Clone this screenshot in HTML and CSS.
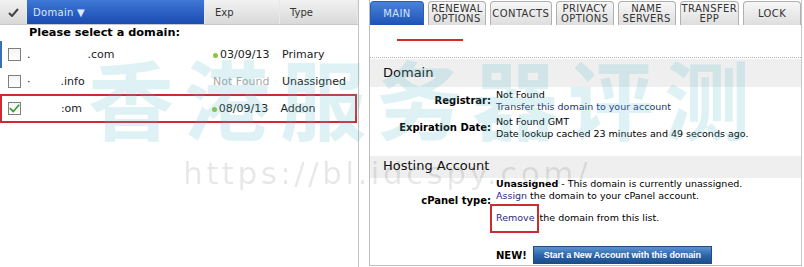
FILE: index.html
```html
<!DOCTYPE html>
<html lang="en">
<head>
  <meta charset="UTF-8" />
  <title>Domain Manager</title>
  <link rel="stylesheet" href="styles.css">
</head>
<body>
  <div class="page">
    <div class="domain-list">
      <div class="list-head">
        <div class="col-check">
          <svg width="11" height="9" viewBox="0 0 11 9"><path d="M1 5 L4 8 L10 1" fill="none" stroke="#444" stroke-width="2"/></svg>
        </div>
        <div class="col-domain sorted">Domain &#9660;</div>
        <div class="col-exp">Exp</div>
        <div class="col-type">Type</div>
      </div>
      <div class="list-title">Please select a domain:</div>
      <div class="row first">
        <div class="col-check"><span class="box"></span></div>
        <div class="col-domain">.<span class="redact r1"></span>.com</div>
        <div class="col-exp"><span class="dot"></span>03/09/13</div>
        <div class="col-type">Primary</div>
      </div>
      <div class="row">
        <div class="col-check"><span class="box"></span></div>
        <div class="col-domain">&middot;<span class="redact r2"></span>.info</div>
        <div class="col-exp missing">Not Found</div>
        <div class="col-type">Unassigned</div>
      </div>
      <div class="row marked">
        <div class="col-check">
          <span class="box">
            <svg width="13" height="11" viewBox="0 0 13 11"><path d="M1 5 L5 9 L12 1" fill="none" stroke="#3a9a3a" stroke-width="2"/></svg>
          </span>
        </div>
        <div class="col-domain"><span class="redact r3"></span>:om</div>
        <div class="col-exp"><span class="dot"></span>08/09/13</div>
        <div class="col-type">Addon</div>
      </div>
    </div>

    <div class="details">
      <div class="tabs">
        <div class="tab active">MAIN</div>
        <div class="tab">RENEWAL<br>OPTIONS</div>
        <div class="tab wide">CONTACTS</div>
        <div class="tab">PRIVACY<br>OPTIONS</div>
        <div class="tab">NAME<br>SERVERS</div>
        <div class="tab">TRANSFER<br>EPP</div>
        <div class="tab">LOCK</div>
      </div>
      <div class="title-strip"><span class="strike"></span></div>

      <div class="section-head">Domain</div>
      <div class="fields">
        <div class="label">Registrar:</div>
        <div class="value">Not Found<br><a href="#">Transfer this domain to your account</a></div>
        <div class="label">Expiration Date:</div>
        <div class="value">Not Found GMT<br>Date lookup cached 23 minutes and 49 seconds ago.</div>
      </div>

      <div class="section-head hosting">Hosting Account</div>
      <div class="fields tight">
        <div class="label">cPanel type:</div>
        <div class="value">
          <b>Unassigned</b> - This domain is currently unassigned.<br>
          <a href="#">Assign</a> the domain to your cPanel account.
          <div class="remove-line"><a href="#" class="boxed">Remove</a> the domain from this list.</div>
        </div>
      </div>
      <div class="new-account">
        <b>NEW!</b>
        <button class="start-button">Start a New Account with this domain</button>
      </div>
    </div>
  </div>

  <div class="watermark">
    <div class="wm-cn">香港服务器评测</div>
    <div class="wm-url">https://bl.idcspy.com/</div>
  </div>
</body>
</html>
```

FILE: styles.css
```css
* { margin: 0; padding: 0; box-sizing: border-box; }
body {
  font-family: "DejaVu Sans", Verdana, sans-serif;
  background: #fff;
  color: #000;
  width: 804px;
  height: 267px;
  overflow: hidden;
  position: relative;
}
.page {
  display: flex;
  height: 267px;
}

/* left list */
.domain-list {
  width: 359px;
  border-right: 1px solid #c4c4c4;
  font-size: 11px;
}
.list-head {
  display: flex;
  height: 25px;
  background: linear-gradient(#f2f2f2, #d9d9d9);
  border-bottom: 1px solid #c9c9c9;
  color: #333;
  font-size: 10px;
}
.list-head > div {
  display: flex;
  align-items: center;
  border-right: 1px solid #e8e8e8;
}
.list-head .sorted {
  background: linear-gradient(#3f78d6, #1a4bb0);
  color: #dce8ff;
  padding-left: 6px;
  letter-spacing: 0.3px;
}
.col-check { width: 27px; justify-content: center; display: flex; align-items: center; }
.col-domain { width: 178px; }
.col-exp { width: 75px; padding-left: 8px; }
.col-type { width: 78px; padding-left: 2px; }
.list-head .col-exp { padding-left: 10px; }
.list-head .col-type { padding-left: 10px; }

.list-title {
  height: 16px;
  padding-left: 29px;
  font-weight: bold;
  font-size: 11.3px;
  line-height: 16px;
}
.row {
  display: flex;
  align-items: center;
  height: 27px;
  font-size: 11px;
  color: #222;
}
.row.first { border-left: 2px solid #3b6fb5; }
.row.first .col-check { width: 25px; }
.row .col-check { justify-content: flex-end; padding-right: 6px; }
.box {
  width: 13px;
  height: 13px;
  border: 1px solid #7f7f7f;
  background: linear-gradient(#f4f4f4, #fff);
  display: flex;
  align-items: center;
  justify-content: center;
}
.redact { display: inline-block; height: 10px; background: #fff; }
.r1 { width: 57px; }
.r2 { width: 30px; }
.r3 { width: 34px; }
.dot {
  display: inline-block;
  width: 5px;
  height: 5px;
  border-radius: 50%;
  background: #8cc63f;
  margin-right: 2px;
  vertical-align: middle;
}
.missing { color: #a8a8a8; }
.row.marked {
  outline: 2px solid #cf2a30;
  outline-offset: -1px;
  margin-left: 1px;
  width: 355px;
}
.row.marked .col-check { width: 26px; }

/* right panel */
.details {
  margin-left: 10px;
  width: 433px;
  border-left: 1px solid #bdbdbd;
  border-right: 1px solid #c8c8c8;
  border-bottom: 1px solid #bdbdbd;
  height: 266px;
  font-size: 10px;
}
.tabs {
  display: flex;
  gap: 4px;
  height: 25px;
  padding-left: 1px;
  margin-left: -1px;
}
.tab {
  flex: 1 0 0;
  height: 24px;
  margin-top: 1px;
  border: 1px solid #b0b0b0;
  border-bottom: none;
  border-radius: 4px 4px 0 0;
  background: linear-gradient(#f7f7f7, #dedede);
  color: #333;
  font-size: 10px;
  letter-spacing: 0.4px;
  line-height: 10px;
  text-align: center;
  display: flex;
  align-items: center;
  justify-content: center;
  padding: 0 1px;
}
.tab.wide { flex-basis: 8px; }
.tab.active {
  background: linear-gradient(#4a82d8, #1d52b6);
  border-color: #2a5cb8;
  color: #d6e4ff;
  flex: 0 0 54px;
}
.title-strip {
  height: 33px;
  border-bottom: 1px dotted #b5b5b5;
  position: relative;
}
.strike {
  display: block;
  position: absolute;
  left: 27px;
  top: 14px;
  width: 66px;
  height: 2px;
  background: #d42a2a;
}
.section-head {
  margin-top: 1px;
  height: 28px;
  background: #efefef;
  font-size: 13px;
  line-height: 28px;
  padding-left: 13px;
  color: #111;
}
.section-head.hosting {
  margin-top: 16px;
  height: 22px;
  line-height: 20px;
}
.fields {
  display: grid;
  grid-template-columns: 121px 1fr;
  column-gap: 5px;
  row-gap: 3px;
  align-items: center;
  padding-top: 2px;
  line-height: 12px;
  font-size: 9.5px;
}
.fields.tight { padding-top: 0; }
.label {
  text-align: right;
  font-weight: bold;
  font-size: 10px;
}
.value a { color: #2b2b86; text-decoration: none; }
.remove-line { margin-top: 10px; }
.boxed {
  outline: 2px solid #cf2a30;
  padding: 6px 2px 8px 4px;
  margin-left: -4px;
}
.new-account {
  display: flex;
  align-items: center;
  gap: 6px;
  margin-top: 22px;
  padding-left: 126px;
  font-size: 10px;
}
.start-button {
  height: 18px;
  width: 179px;
  border: 1px solid #1f4c82;
  background: linear-gradient(#5c94cf, #2a64a8 55%, #1b4d8c);
  color: #fff;
  font-family: "Liberation Sans", Arial, sans-serif;
  font-weight: bold;
  font-size: 9px;
  letter-spacing: -0.1px;
  white-space: nowrap;
}

/* watermark overlay */
.watermark {
  position: absolute;
  inset: 0;
  pointer-events: none;
}
.wm-cn {
  position: absolute;
  left: 88px;
  top: 34px;
  font-family: "Noto Sans CJK SC", sans-serif;
  font-weight: bold;
  font-size: 86px;
  letter-spacing: 10px;
  color: rgba(90, 185, 200, 0.2);
  white-space: nowrap;
}
.wm-url {
  position: absolute;
  left: 183px;
  top: 155px;
  font-family: "DejaVu Sans", sans-serif;
  font-size: 31px;
  letter-spacing: 3.5px;
  color: rgba(0, 0, 0, 0.1);
  white-space: nowrap;
}
```
